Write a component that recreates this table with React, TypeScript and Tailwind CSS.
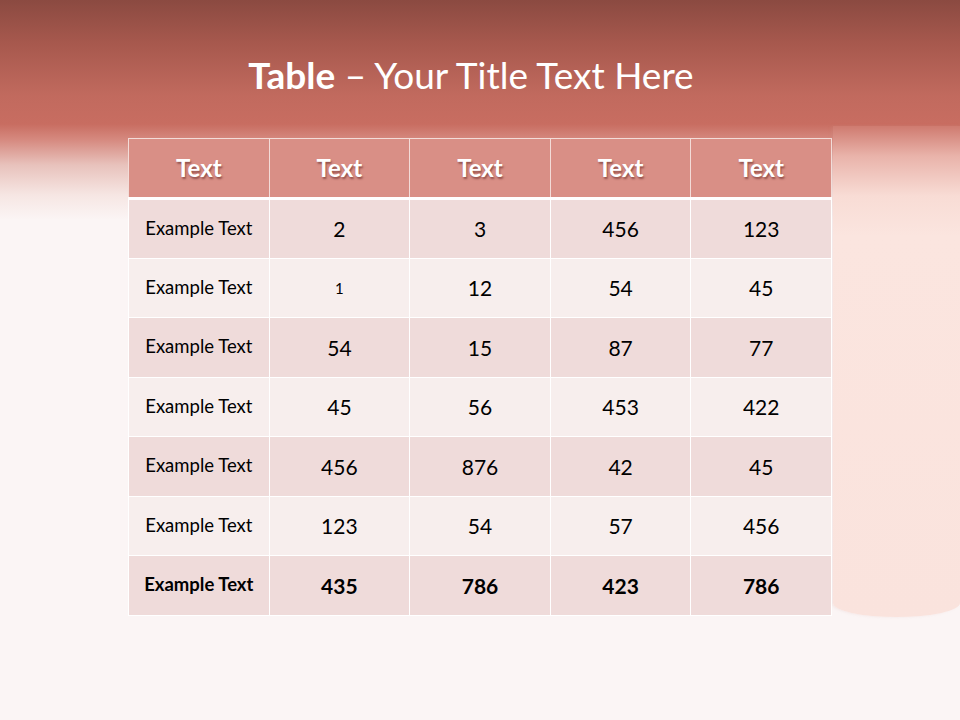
import React from "react";

const rows: (string | number)[][] = [
  ["Example Text", "2", "3", "456", "123"],
  ["Example Text", "1", "12", "54", "45"],
  ["Example Text", "54", "15", "87", "77"],
  ["Example Text", "45", "56", "453", "422"],
  ["Example Text", "456", "876", "42", "45"],
  ["Example Text", "123", "54", "57", "456"],
  ["Example Text", "435", "786", "423", "786"],
];

export default function App() {
  return (
    <div
      className="relative w-[960px] h-[720px] overflow-hidden bg-[#fbf5f5]"
      style={{ fontFamily: "Lato, 'Open Sans', sans-serif" }}
    >
      <div className="absolute inset-x-0 top-0 h-[220px] bg-[linear-gradient(to_bottom,#8b4a41_0px,#a8594e_45px,#c16a5e_95px,#c86d61_124px,#d68a80_140px,#e8c2bc_165px,#f6e6e3_195px,#fbf5f5_220px)]" />
      <div className="absolute left-[833px] right-0 top-[126px] bottom-[103px] rounded-b-[50%_14px] bg-[linear-gradient(to_bottom,#cf7b70_0px,#e9b3aa_30px,#f8dcd5_70px,#fbe5df_110px,#fae3dd_100%)] shadow-[-2px_0_3px_rgba(200,150,140,0.15)]" />
      <div className="relative flex flex-col items-center">
        <h1 className="mt-[53px] mr-[18px] h-[44px] text-[37px] leading-[44px] text-white">
          <span className="font-bold">Table</span> – Your Title Text Here
        </h1>
        <table className="mt-[41px] w-[704px] border-collapse table-fixed">
          <thead>
            <tr className="h-[60px] bg-[#d98f86]">
              {["Text", "Text", "Text", "Text", "Text"].map((t, i) => (
                <th
                  key={i}
                  className="border border-[#f3dcd8] border-b-[3px] border-b-white text-center text-[24px] font-bold text-white [text-shadow:1px_2px_2px_rgba(90,30,25,0.55)]"
                >
                  {t}
                </th>
              ))}
            </tr>
          </thead>
          <tbody>
            {rows.map((r, ri) => {
              const last = ri === rows.length - 1;
              return (
                <tr
                  key={ri}
                  className={`h-[59.5px] ${ri % 2 === 0 ? "bg-[#efdbda]" : "bg-[#f7eeed]"}`}
                >
                  {r.map((c, ci) => (
                    <td
                      key={ci}
                      className={`border border-white text-center text-black ${
                        ci === 0 ? "text-[18.5px]" : c === "1" ? "text-[15px]" : "text-[21px]"
                      } ${last ? "font-bold" : ""}`}
                    >
                      {c}
                    </td>
                  ))}
                </tr>
              );
            })}
          </tbody>
        </table>
      </div>
    </div>
  );
}
